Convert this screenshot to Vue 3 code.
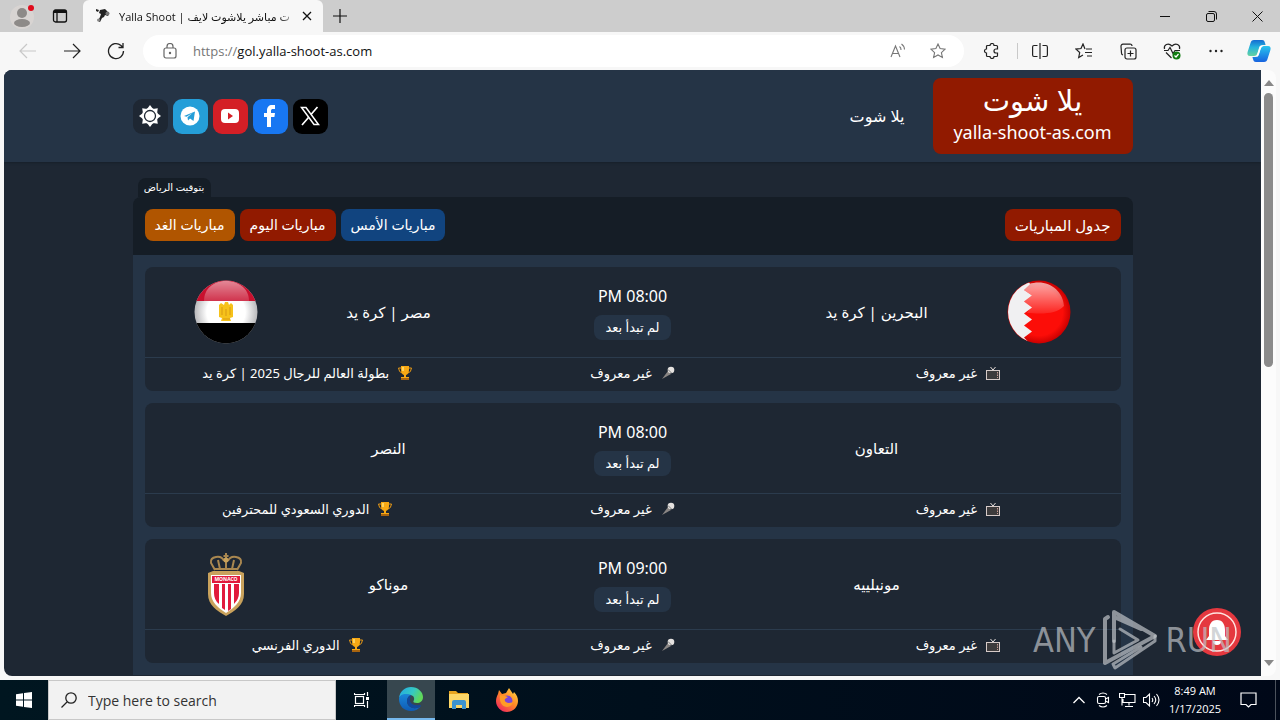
<template>
    <div class="desktop">
        <div class="browser">
            <div class="tab-bar">
                <div class="tab-tools">
                    <button class="plain profile" aria-label="Profile">
                        <svg width="26" height="26" viewBox="0 0 26 26">
                            <circle cx="13" cy="14" r="12" fill="#d8d4d2" />
                            <circle cx="13" cy="10" r="5" fill="#8d8a88" />
                            <ellipse cx="13" cy="20" rx="8" ry="4" fill="#8d8a88" />
                            <circle cx="22" cy="5" r="3" fill="#e00b1c" />
                        </svg>
                    </button>
                    <button class="plain" aria-label="Tab actions">
                        <svg width="16" height="16" viewBox="0 0 16 16" fill="none" stroke="#111" stroke-width="1.3">
                            <rect x="1.5" y="2" width="13" height="12" rx="2" />
                            <path d="M2 3.5h12" stroke-width="3" />
                            <path d="M5 4v10" />
                        </svg>
                    </button>
                </div>
                <div class="tab">
                    <svg class="favicon" width="16" height="16" viewBox="0 0 16 16" fill="#222">
                        <path d="M1 1l3 1-1 2-2-1zM5 2l5-1 2 2 2 3-1 2-3-1-1 2-2 1-2 4-2-1 2-4 1-3-2-1z" />
                        <circle cx="12.5" cy="5.5" r="2" fill="#777" />
                        <circle cx="3.500" cy="12" r="1.5" fill="#888" />
                    </svg>
                    <span class="tab-title">Yalla Shoot | ت مباشر يلاشوت لايف</span>
                    <button class="plain tab-close" aria-label="Close tab">
                        <svg width="10" height="10" viewBox="0 0 10 10" stroke="#111" stroke-width="1.3"><path d="M1 1l8 8M9 1l-8 8" /></svg>
                    </button>
                </div>
                <button class="plain new-tab" aria-label="New tab">
                    <svg width="14" height="14" viewBox="0 0 14 14" stroke="#111" stroke-width="1.2"><path d="M7 0v14M0 7h14" /></svg>
                </button>
                <div class="window-buttons">
                    <button class="plain" aria-label="Minimize">
                        <svg width="10" height="10" viewBox="0 0 10 10" stroke="#111"><path d="M0 5.5h10" /></svg>
                    </button>
                    <button class="plain" aria-label="Restore">
                        <svg width="11" height="11" viewBox="0 0 11 11" fill="none" stroke="#111">
                            <rect x=".5" y="2.5" width="8" height="8" rx="1.5" />
                            <path d="M2.5.5H8a2.5 2.5 0 0 1 2.500 2.500v5.500" />
                        </svg>
                    </button>
                    <button class="plain" aria-label="Close">
                        <svg width="11" height="11" viewBox="0 0 11 11" stroke="#111"><path d="M.5.5l10 10M10.500.5l-10 10" /></svg>
                    </button>
                </div>
            </div>

            <div class="toolbar">
                <button class="plain tool" aria-label="Back">
                    <svg width="18" height="16" viewBox="0 0 18 16" fill="none" stroke="#c8c8c8" stroke-width="1.2"><path d="M17 8H1M8 1L1 8l7 7" /></svg>
                </button>
                <button class="plain tool" aria-label="Forward">
                    <svg width="18" height="16" viewBox="0 0 18 16" fill="none" stroke="#222" stroke-width="1.2"><path d="M1 8h16M10 1l7 7-7 7" /></svg>
                </button>
                <button class="plain tool" aria-label="Refresh">
                    <svg width="18" height="18" viewBox="0 0 18 18" fill="none" stroke="#222" stroke-width="1.3"><path d="M16.500 9A7.500 7.500 0 1 1 14 3.500L16 5.500M16 1v4.500h-4.500" /></svg>
                </button>
                <label class="address">
                    <svg class="lock" width="14" height="16" viewBox="0 0 14 16" fill="none" stroke="#666" stroke-width="1.200">
                        <rect x="1" y="5" width="12" height="10" rx="2" />
                        <path d="M4 5V3.500a3 3 0 0 1 6 0V5" />
                        <circle cx="7" cy="10" r=".6" fill="#666" />
                    </svg>
                    <span class="scheme">https://</span>
                    <input v-model="address" class="address-input" type="text" aria-label="Address">
                    <svg class="address-icon" width="16" height="16" viewBox="0 0 16 16" fill="none" stroke="#777" stroke-width="1.100">
                        <path d="M1 14L5.500 3 10 14M2.500 10.500h6M9.500 3.500a4 4 0 0 1 1.500 3.500M11.500 1a7 7 0 0 1 3 5.500" />
                    </svg>
                    <svg class="address-icon" width="16" height="16" viewBox="0 0 16 16" fill="none" stroke="#777" stroke-width="1.100">
                        <path d="M8 1l2.100 4.600 5 .6-3.700 3.400 1 4.900L8 12l-4.400 2.500 1-4.900L.9 6.200l5-.6z" />
                    </svg>
                </label>
                <button class="plain tool" aria-label="Extensions">
                    <svg width="16" height="16" viewBox="0 0 16 16" fill="none" stroke="#222" stroke-width="1.200">
                        <path d="M4.500 2.500H7a2 2 0 0 1 4 0h2.500A1 1 0 0 1 14.500 3.500V6H13a2 2 0 0 0 0 4h1.500v2.500a1 1 0 0 1-1 1H11a2 2 0 0 1-4 0H4.500a1 1 0 0 1-1-1V10a2 2 0 0 1 0-4V3.500a1 1 0 0 1 1-1z" />
                    </svg>
                </button>
                <span class="divider"></span>
                <button class="plain tool" aria-label="Split screen">
                    <svg width="16" height="16" viewBox="0 0 16 16" fill="none" stroke="#222" stroke-width="1.200">
                        <path d="M5.500 2.500H2A1.500 1.500 0 0 0 .6 4v8A1.500 1.500 0 0 0 2 13.500h3.500M10.500 2.500H14A1.500 1.500 0 0 1 15.400 4v8a1.500 1.500 0 0 1-1.400 1.500h-3.500M8 0v16" />
                    </svg>
                </button>
                <button class="plain tool" aria-label="Favorites">
                    <svg width="18" height="16" viewBox="0 0 18 16" fill="none" stroke="#222" stroke-width="1.200">
                        <path d="M10 6L8 1 6 5.500l-5 .6 3.700 3.400-1 5L8 12M11 6h6M10 9.500h7M12 13h5" />
                    </svg>
                </button>
                <button class="plain tool" aria-label="Collections">
                    <svg width="17" height="17" viewBox="0 0 17 17" fill="none" stroke="#222" stroke-width="1.200">
                        <rect x="5" y="5" width="11" height="11" rx="2" />
                        <path d="M10.500 7.500v6M7.500 10.500h6M3 12A2 2 0 0 1 1.500 10L1 3.500A2 2 0 0 1 3 1.200L10 1a2 2 0 0 1 2 2" />
                    </svg>
                </button>
                <button class="plain tool" aria-label="Browser essentials">
                    <svg width="18" height="18" viewBox="0 0 18 18" fill="none" stroke="#222" stroke-width="1.200">
                        <path d="M1.500 7C.5 3 5 0 9 4c4-4 8.500-1 7.500 3M3 10.500L8.500 16M1 8.500h4L7 5.500l3 6 2-3h5" />
                        <circle cx="13.500" cy="13.500" r="4" fill="#107c10" stroke="none" />
                        <path d="M11.500 13.500l1.500 1.500 2.500-3" stroke="#fff" />
                    </svg>
                </button>
                <button class="plain tool" aria-label="More">
                    <svg width="14" height="4" viewBox="0 0 14 4" fill="#222"><circle cx="1.500" cy="2" r="1.200" /><circle cx="7" cy="2" r="1.200" /><circle cx="12.500" cy="2" r="1.200" /></svg>
                </button>
                <button class="plain copilot" aria-label="Copilot">
                    <svg width="24" height="24" viewBox="0 0 24 24">
                        <defs>
                            <linearGradient id="cpA" x1="0" y1="0" x2="0" y2="1"><stop offset="0" stop-color="#146bd1" /><stop offset=".45" stop-color="#25b2dd" /><stop offset="1" stop-color="#64d2a0" /></linearGradient>
                            <linearGradient id="cpB" x1="0" y1="0" x2="0" y2="1"><stop offset="0" stop-color="#29c5ee" /><stop offset="1" stop-color="#1763df" /></linearGradient>
                        </defs>
                        <path d="M7 1h8c2 0 2.500 1 3 3l.6 2h-3c-2 0-3 1-3.600 3l-1.500 5c-.6 2-1.500 3-3.500 3H3c-2.500 0-3-2-2.400-4L3.500 4C4 2 5 1 7 1z" fill="url(#cpA)" />
                        <path d="M17 23H9c-2 0-2.500-1-3-3l-.6-2h3c2 0 3-1 3.600-3l1.500-5c.6-2 1.500-3 3.500-3h4c2.500 0 3 2 2.400 4L20.500 20c-.5 2-1.500 3-3.500 3z" fill="url(#cpB)" />
                        <path d="M13 7h3c-1.500 1-2 2-2.500 3.500L12 15c-.5 1.500-1 2.500-2.500 3 .5-1 .5-2 1-3.500z" fill="#fff" />
                    </svg>
                </button>
            </div>

            <div class="viewport">
                <div class="site" dir="rtl" lang="ar">
                    <header class="site-header">
                        <div class="container header-row">
                            <a class="logo" href="#">
                                <span class="logo-name">يلا شوت</span>
                                <span class="logo-domain" dir="ltr">yalla-shoot-as.com</span>
                            </a>
                            <nav>
                                <a class="nav-link" href="#">يلا شوت</a>
                            </nav>
                            <div class="social">
                                <a class="social-link x" href="#" aria-label="X">
                                    <svg width="20" height="20" viewBox="0 0 20 20" fill="none" stroke="#fff">
                                        <path d="M1.500 1.500H6L18.500 18.500H14z" stroke-width="1.500" />
                                        <path d="M17.500 1L11 8.500M8.500 11.500L2 19" stroke-width="1.700" />
                                    </svg>
                                </a>
                                <a class="social-link facebook" href="#" aria-label="Facebook">
                                    <svg width="14" height="24" viewBox="0 0 14 24" fill="#fff"><path d="M4 23V13H1V9h3V6.500C4 3 6 1 9 1h3v4h-2c-1.300 0-2 .6-2 2v2h4l-.6 4H8v10z" /></svg>
                                </a>
                                <a class="social-link youtube" href="#" aria-label="YouTube">
                                    <svg width="20" height="16" viewBox="0 0 20 16"><rect x="1" y="1" width="18" height="14" rx="4" fill="#fff" /><path d="M8 4.500v7l5-3.500z" fill="#d41f26" /></svg>
                                </a>
                                <a class="social-link telegram" href="#" aria-label="Telegram">
                                    <svg width="20" height="20" viewBox="0 0 20 20"><circle cx="10" cy="10" r="9.500" fill="#fff" /><path d="M4 10l11-4.500-1.500 9.500-3.500-2.500-2 2-.5-3.300 5-4.200-6 3.700z" fill="#259ed8" /></svg>
                                </a>
                                <button class="plain social-link theme" aria-label="المظهر">
                                    <svg width="24" height="24" viewBox="0 0 24 24" fill="none" stroke="#fff">
                                        <circle cx="12" cy="12" r="8" fill="#fff" stroke="none" />
                                        <path v-for="angle in rays" :key="angle" d="M9 5L12 1l3 4z" fill="#fff" stroke="none" :transform="`rotate(${angle} 12 12)`" />
                                        <circle cx="12" cy="12" r="5.500" stroke="#1e2733" stroke-width="1.300" />
                                    </svg>
                                </button>
                            </div>
                        </div>
                    </header>

                    <main class="container">
                        <div class="timezone">بتوقيت الرياض</div>
                        <div class="schedule-head">
                            <h1 class="pill title">جدول المباريات</h1>
                            <a v-for="day in days" :key="day.id" class="pill" :class="day.id" href="#">{{ day.label }}</a>
                        </div>
                        <div class="schedule">
                            <article v-for="match in matches" :key="match.home" class="match">
                                <div class="match-main">
                                    <div class="crest">
                                        <svg v-if="match.homeLogo === 'bahrain'" width="64" height="64" viewBox="0 0 64 64">
                                            <defs>
                                                <radialGradient id="bhRed" cx=".5" cy=".5" r=".5"><stop offset=".75" stop-color="#fc0d08" /><stop offset="1" stop-color="#c90000" /></radialGradient>
                                                <linearGradient id="bhGloss" x1="0" y1="0" x2="0" y2="1"><stop offset="0" stop-color="#fff" stop-opacity=".65" /><stop offset="1" stop-color="#fff" stop-opacity=".1" /></linearGradient>
                                                <clipPath id="bhClip"><circle cx="32" cy="32" r="31" /></clipPath>
                                            </defs>
                                            <circle cx="32" cy="32" r="31.500" fill="url(#bhRed)" />
                                            <path d="M0 0h21L23 4l-6 6 8 5.500-8 6 8 6-8 6 8 6-8 6 8 6-8 6 6 6-2 6H0z" fill="#f0f0f2" clip-path="url(#bhClip)" />
                                            <path d="M22 4C40-2 56 10 57 26c-8 8-19 8-37 7l4-6-7-5.500 8-6-8-5.500z" fill="url(#bhGloss)" />
                                        </svg>
                                    </div>
                                    <div class="team">{{ match.home }}</div>
                                    <div class="status">
                                        <span class="kickoff">{{ match.time }}</span>
                                        <span class="state">لم تبدأ بعد</span>
                                    </div>
                                    <div class="team">{{ match.away }}</div>
                                    <div class="crest">
                                        <svg v-if="match.awayLogo === 'egypt'" width="64" height="64" viewBox="0 0 64 64">
                                            <defs>
                                                <linearGradient id="egGloss" x1="0" y1="0" x2="0" y2="1"><stop offset="0" stop-color="#fff" stop-opacity=".5" /><stop offset="1" stop-color="#fff" stop-opacity=".15" /></linearGradient>
                                                <radialGradient id="egWhite"><stop offset=".6" stop-color="#fff" /><stop offset="1" stop-color="#b5b5b8" /></radialGradient>
                                                <clipPath id="egClip"><circle cx="32" cy="32" r="31.500" /></clipPath>
                                            </defs>
                                            <g clip-path="url(#egClip)">
                                                <rect width="64" height="64" fill="url(#egWhite)" />
                                                <rect width="64" height="21" fill="#c8102e" />
                                                <rect y="43" width="64" height="21" fill="#000" />
                                                <path d="M10 21C10 8 20 1 32 1s23 7 23 20z" fill="url(#egGloss)" />
                                            </g>
                                            <path d="M31 22h3l1 3 2-2 2 2v12l-3 1 1 3H27l1-3-3-1V25l2-2 3 2z" fill="#f6c21a" />
                                            <path d="M28 27v8M36 27v8M32 29v7M29 39h7" stroke="#d99a12" fill="none" />
                                        </svg>
                                        <svg v-if="match.awayLogo === 'monaco'" width="38" height="64" viewBox="0 0 38 64">
                                            <path d="M1 21l5-2h26l5 2v21c0 11-9 17-18 22C10 59 1 53 1 42z" fill="#c9a25c" />
                                            <path d="M4 23h30v18c0 9-7 15-15 20C11 56 4 50 4 41z" fill="#fff" />
                                            <path d="M5 24h28v7H5zM7 32h5v20q-5-4-5-11zM15 32h3v26l-3-2zM21 32h3v25l-3 2zM27 32h5v9q0 6-5 11z" fill="#e11a3c" />
                                            <text x="19" y="29" font-size="5" font-weight="700" fill="#fff" text-anchor="middle" direction="ltr">MONACO</text>
                                            <path d="M8 18L4 11q-1-5 5-6 6-1 8 4M30 18l4-7q1-5-5-6-6-1-8 4M13 17l-2-9M25 17l2-9M19 17V1M16.500 4h5M8 17h22" fill="none" stroke="#a98750" stroke-width="2" />
                                            <circle cx="19" cy="8" r="2.500" fill="#c9a25c" />
                                        </svg>
                                    </div>
                                </div>
                                <div class="match-info">
                                    <div class="info">
                                        <svg width="14" height="14" viewBox="0 0 14 14" fill="none">
                                            <path d="M4.500 1L7 4l2.500-3" stroke="#e8e0dc" />
                                            <rect x=".5" y="4.500" width="13" height="9" fill="#3d3b3c" stroke="#d6cac8" />
                                            <path d="M11.500 6v6" stroke="#c99a91" stroke-dasharray="1.500 1" />
                                        </svg>
                                        <span>غير معروف</span>
                                    </div>
                                    <div class="info">
                                        <svg width="14" height="14" viewBox="0 0 14 14">
                                            <path d="M1 13L7 5l3 3z" fill="#8a8684" />
                                            <circle cx="10" cy="4" r="3.300" fill="#e5e2e0" />
                                            <path d="M7 3.500L10.500 7" stroke="#777" />
                                        </svg>
                                        <span>غير معروف</span>
                                    </div>
                                    <div class="info">
                                        <svg width="14" height="14" viewBox="0 0 14 14">
                                            <path d="M3 2H.5Q1 6.500 4 7M11 2h2.500Q13 6.500 10 7" fill="none" stroke="#e99a16" />
                                            <path d="M3 0h8v4c0 3-1.500 4.500-3 5v2h3v3H3v-3h3V9C4.500 8.500 3 7 3 4z" fill="#f8a914" />
                                            <path d="M5 1v4" stroke="#ffe27a" stroke-width="1.500" />
                                            <path d="M3 12h8v2H3z" fill="#a8640f" />
                                        </svg>
                                        <span>{{ match.league }}</span>
                                    </div>
                                </div>
                            </article>
                        </div>
                    </main>
                </div>
                <div class="scrollbar">
                    <svg width="10" height="6" viewBox="0 0 10 6" fill="#888"><path d="M0 6l5-6 5 6z" /></svg>
                    <div class="track"><div class="thumb"></div></div>
                    <svg width="10" height="6" viewBox="0 0 10 6" fill="#888"><path d="M0 0l5 6 5-6z" /></svg>
                </div>

                <button class="plain bell" aria-label="الإشعارات">
                    <svg width="48" height="48" viewBox="0 0 48 48">
                        <circle cx="24" cy="24" r="24" fill="#e5383f" />
                        <circle cx="24" cy="24" r="19" fill="none" stroke="#ffe4e0" stroke-width="1.500" />
                        <path d="M24 12c-6 0-8 5-8 10v6l-3 4h22l-3-4v-6c0-5-2-10-8-10zM20 33a4 4 0 0 0 8 0z" fill="#fff" />
                    </svg>
                </button>
                <div class="watermark">
                    <span>ANY</span>
                    <svg width="56" height="62" viewBox="0 0 56 62" fill="none" stroke="currentColor" stroke-width="4" stroke-linejoin="round" stroke-linecap="round">
                        <path d="M12 32V3l41 24M53 27L3 54V10l3-2M39 20L12 8" />
                        <path d="M53 27v5L13 59l-2-4 28-17M12 32v12l24-13L18 20" stroke-width="3" />
                    </svg>
                    <span>RUN</span>
                </div>
            </div>
        </div>

        <div class="taskbar">
            <button class="plain start" aria-label="Start">
                <svg width="16" height="16" viewBox="0 0 16 16" fill="#fff"><path d="M0 2.200L7 1.200V7.500H0zM8 1l8-1v7.500H8zM0 8.500h7v6.300l-7-1zM8 8.500h8V16l-8-1.100z" /></svg>
            </button>
            <label class="search">
                <svg width="16" height="16" viewBox="0 0 16 16" fill="none" stroke="#222" stroke-width="1.300"><circle cx="10" cy="6" r="5.200" /><path d="M6 10l-5.500 5.500" /></svg>
                <input v-model="query" class="search-input" type="text" placeholder="Type here to search" aria-label="Search">
            </label>
            <button class="plain task-view" aria-label="Task view">
                <svg width="16" height="16" viewBox="0 0 16 16" fill="none" stroke="#fff" stroke-width="1.200"><rect x="1.500" y="4.500" width="8" height="7" /><path d="M.5 1v1.500h10V1M.5 15v-1.500h10V15M13.500 0v4M13.500 9v7" /><path d="M13.500 5v3" stroke-width="3" /></svg>
            </button>
            <button class="plain app active" aria-label="Edge">
                <svg width="24" height="24" viewBox="0 0 24 24">
                    <defs>
                        <linearGradient id="edTop" x1="0" y1="0" x2="1" y2=".4"><stop offset="0" stop-color="#22a7e6" /><stop offset=".6" stop-color="#35c9c3" /><stop offset="1" stop-color="#60d85a" /></linearGradient>
                        <linearGradient id="edLow" x1="0" y1="0" x2="0" y2="1"><stop offset="0" stop-color="#1a86d8" /><stop offset="1" stop-color="#0f5bb5" /></linearGradient>
                    </defs>
                    <path d="M0 11C1 4 6 0 12 0c7 0 12 5 12 10 0 4-3 6-6 6s-4-1-3.500-2C16 12 15 8 11 8 6 7 1 8 0 11z" fill="url(#edTop)" />
                    <path d="M0 12c0-3 3-5 7-5 3 0 5 1 5 1-3 1-4 4-4 6 0 5 5 8 9 7 2 0 4-1 5-2-2 3-6 5-10 5C5 24 0 19 0 12z" fill="url(#edLow)" />
                    <path d="M12 8c-3 1-4 4-4 6 0 5 5 8 9 7 2 0 4-1 5-2 0-1-1-1-2-1-5 1-10-2-9-6 0-2 1-3 1-4z" fill="#12489c" />
                </svg>
            </button>
            <button class="plain app" aria-label="File Explorer">
                <svg width="22" height="20" viewBox="0 0 22 20"><path d="M1 1h7l2 2h10v3H1z" fill="#e8a520" /><rect x="1" y="4" width="20" height="14" fill="#fdd767" /><path d="M4 19v-7q0-2 2-2h10q2 0 2 2v7h-4v-4H8v4z" fill="#3d94cf" /></svg>
            </button>
            <button class="plain app" aria-label="Firefox">
                <svg width="24" height="24" viewBox="0 0 24 24">
                    <defs><linearGradient id="ffBody" x1="1" y1="0" x2=".2" y2="1"><stop offset="0" stop-color="#ffe14a" /><stop offset=".5" stop-color="#ff8b25" /><stop offset="1" stop-color="#f0245e" /></linearGradient></defs>
                    <path d="M3 6l1-4 3 4 4-1 3-5c2 3 3 4 4 6l1-2c3 3 4 6 4 9 0 6-5 11-11 11S1 19 1 13c0-3 1-5 2-7z" fill="url(#ffBody)" />
                    <circle cx="12" cy="13" r="5.500" fill="#7a45d8" />
                    <path d="M5 7l5 1 3 1-3 2c-1 2 1 4 4 4 2 0 4-1 4-2 0 4-3 6-6 6-5 0-8-5-7-12z" fill="#ff9b26" />
                </svg>
            </button>
            <div class="tray">
                <button class="plain tray-button" aria-label="Show hidden icons">
                    <svg width="12" height="8" viewBox="0 0 12 8" fill="none" stroke="#fff" stroke-width="1.300"><path d="M.5 7L6 1.500 11.500 7" /></svg>
                </button>
                <button class="plain tray-button" aria-label="Meet now">
                    <svg width="14" height="18" viewBox="0 0 14 18" fill="none" stroke="#fff" stroke-width="1.100"><rect x="1.500" y="5.500" width="8" height="7" rx="1.500" /><path d="M9.500 8l3-1.500v5l-3-1.500M3 3.500q4-3 8 0M3 14.500q4 3 8 0" /></svg>
                </button>
                <button class="plain tray-button" aria-label="Network">
                    <svg width="17" height="16" viewBox="0 0 17 16" fill="none" stroke="#fff" stroke-width="1.100"><path d="M6 2.500h10v8H4V7M10 10.500v3M6 14.500h8M.5 1.500h5v4h-5zM3 5.500v8" /></svg>
                </button>
                <button class="plain tray-button" aria-label="Volume">
                    <svg width="17" height="16" viewBox="0 0 17 16" fill="none" stroke="#fff" stroke-width="1.100"><path d="M.5 5.500H3L6.500 2v12L3 10.500H.5zM9 6q1.500 2 0 4M11 4q3.500 4 0 8M13.500 2q5 6 0 12" /></svg>
                </button>
                <div class="clock">
                    <span>8:49 AM</span>
                    <span>1/17/2025</span>
                </div>
                <button class="plain notifications" aria-label="Notifications">
                    <svg width="17" height="17" viewBox="0 0 17 17" fill="none" stroke="#fff" stroke-width="1.200"><path d="M1 1h15v11.500h-5L8.500 15 6 12.500H1z" /></svg>
                </button>
            </div>
        </div>
    </div>
</template>

<script setup>
import { ref } from 'vue';

const address = ref('gol.yalla-shoot-as.com');
const query = ref('');

const rays = [0, 45, 90, 135, 180, 225, 270, 315];

const days = [
    { id: 'yesterday', label: 'مباريات الأمس' },
    { id: 'today', label: 'مباريات اليوم' },
    { id: 'tomorrow', label: 'مباريات الغد' }
];

const matches = [
    {
        home: 'البحرين | كرة يد',
        homeLogo: 'bahrain',
        away: 'مصر | كرة يد',
        awayLogo: 'egypt',
        time: '08:00 PM',
        league: 'بطولة العالم للرجال 2025 | كرة يد'
    },
    {
        home: 'التعاون',
        away: 'النصر',
        time: '08:00 PM',
        league: 'الدوري السعودي للمحترفين'
    },
    {
        home: 'مونبلييه',
        away: 'موناكو',
        awayLogo: 'monaco',
        time: '09:00 PM',
        league: 'الدوري الفرنسي'
    }
];
</script>

<style>
body {
    margin: 0;
}
</style>

<style scoped>
* {
    box-sizing: border-box;
}

.desktop {
    height: 100vh;
    display: flex;
    flex-direction: column;
    overflow: hidden;
    font-family: "Open Sans", "DejaVu Sans", sans-serif;
    font-size: 12px;
    color: #111;
}

.plain {
    display: flex;
    align-items: center;
    justify-content: center;
    padding: 0;
    border: 0;
    background: none;
}

svg {
    flex: none;
}

/* browser window */
.browser {
    flex: 1;
    min-height: 0;
    display: flex;
    flex-direction: column;
    background: #f7f7f7;
}

.tab-bar {
    height: 32px;
    display: flex;
    align-items: center;
    background: #cdcdcd;
}

.tab-tools {
    display: flex;
    align-items: center;
    gap: 17px;
    width: 83px;
    padding-left: 9px;
}

.tab {
    display: flex;
    align-items: center;
    width: 240px;
    height: 32px;
    padding: 0 6px 0 12px;
    background: #f7f7f7;
    border-radius: 6px 6px 0 0;
}

.favicon {
    margin-right: 8px;
}

.tab-title {
    flex: 1;
    font-size: 11px;
    white-space: nowrap;
    mask-image: linear-gradient(to right, #000 90%, transparent);
}

.tab-close {
    width: 20px;
    height: 20px;
}

.new-tab {
    width: 34px;
    height: 32px;
}

.window-buttons {
    display: flex;
    margin-left: auto;
}

.window-buttons button {
    width: 46px;
    height: 32px;
}

.toolbar {
    height: 38px;
    display: flex;
    align-items: center;
    padding-left: 6px;
}

.tool {
    width: 44px;
    height: 32px;
}

.address {
    flex: 1;
    display: flex;
    align-items: center;
    height: 32px;
    margin: 0 5px;
    padding: 0 18px 0 20px;
    background: #fff;
    border-radius: 16px;
    font-size: 13px;
}

.lock {
    margin-right: 16px;
}

.scheme {
    color: #767676;
}

.address-input {
    flex: 1;
    min-width: 0;
    padding: 0;
    border: 0;
    outline: 0;
    background: none;
    font: inherit;
    color: #111;
}

.address-icon {
    margin-left: 24px;
}

.divider {
    width: 1px;
    height: 16px;
    margin-left: 4px;
    background: #c9c9c9;
}

.copilot {
    width: 42px;
    height: 32px;
}

.viewport {
    flex: 1;
    min-height: 0;
    display: flex;
    position: relative;
    margin: 0 4px 4px;
    overflow: hidden;
    border-radius: 8px;
}

.scrollbar {
    width: 15px;
    display: flex;
    flex-direction: column;
    align-items: center;
    padding: 10px 0;
    background: #fcfcfc;
}

.track {
    flex: 1;
    width: 9px;
    padding: 7px 0;
}

.thumb {
    height: 49%;
    background: #8b8b8b;
    border-radius: 5px;
}

/* football site */
.site {
    flex: 1;
    min-width: 0;
    overflow: hidden;
    background: #1e2733;
    color: #fff;
    font-family: "Noto Sans", "DejaVu Sans", sans-serif;
}

.site a {
    color: #fff;
    text-decoration: none;
}

.container {
    width: 100%;
    max-width: 1000px;
    margin: 0 auto;
}

.site-header {
    padding: 8px 0;
    background: #253446;
    box-shadow: 0 1px 2px #16202a;
}

.header-row {
    display: flex;
    align-items: center;
}

.logo {
    display: flex;
    flex-direction: column;
    align-items: center;
    justify-content: center;
    width: 200px;
    height: 76px;
    padding-bottom: 8px;
    background: #911a00;
    border-radius: 8px;
}

.logo-name {
    font-size: 29px;
    line-height: 40px;
}

.logo-domain {
    font-size: 18px;
    line-height: 24px;
}

.nav-link {
    margin-right: 28px;
    font-size: 16px;
}

.social {
    display: flex;
    gap: 5px;
    margin-right: auto;
}

.social-link {
    display: flex;
    align-items: center;
    justify-content: center;
    width: 35px;
    height: 35px;
    border-radius: 9px;
}

.x {
    background: #000;
}

.facebook {
    background: #1877f2;
}

.youtube {
    background: #d41f26;
}

.telegram {
    background: #259ed8;
}

.theme {
    background: #1e2733;
}

.timezone {
    width: 73px;
    margin: 16px auto 0 5px;
    background: #151d26;
    border-radius: 8px 8px 0 0;
    font-size: 10px;
    line-height: 19px;
    text-align: center;
    white-space: nowrap;
}

.schedule-head {
    display: flex;
    gap: 5px;
    padding: 12px 12px 14px;
    background: #151d26;
    border-radius: 8px 8px 0 0;
}

.pill {
    margin: 0;
    padding: 0 10px;
    border-radius: 8px;
    font-size: 14px;
    font-weight: 400;
    line-height: 32px;
    white-space: nowrap;
}

.title {
    margin-left: auto;
    background: #911a00;
    font-size: 15px;
}

.yesterday {
    background: #11447f;
}

.today {
    background: #911a00;
}

.tomorrow {
    background: #b05500;
}

.schedule {
    display: flex;
    flex-direction: column;
    gap: 12px;
    padding: 12px;
    background: #253446;
}

.match {
    background: #1e2733;
    border-radius: 8px;
}

.match-main {
    display: grid;
    grid-template-columns: 1fr 1fr 2fr 1fr 1fr;
    align-items: center;
    justify-items: center;
    height: 90px;
}

.crest {
    display: flex;
}

.team {
    font-size: 15px;
    white-space: nowrap;
}

.status {
    display: flex;
    flex-direction: column;
    align-items: center;
    gap: 7px;
}

.kickoff {
    font-size: 16px;
    line-height: 24px;
}

.state {
    padding: 0 11px;
    background: #253446;
    border-radius: 8px;
    font-size: 13px;
    line-height: 25px;
}

.match-info {
    display: grid;
    grid-template-columns: repeat(3, 1fr);
    border-top: 1px solid #2b3b4d;
}

.info {
    display: flex;
    align-items: center;
    justify-content: center;
    gap: 9px;
    height: 33px;
    padding-bottom: 3px;
    font-size: 13px;
    white-space: nowrap;
}

.bell {
    position: absolute;
    right: 35px;
    bottom: 20px;
}

.watermark {
    position: absolute;
    right: 44px;
    bottom: 5px;
    display: flex;
    align-items: center;
    gap: 7px;
    color: rgba(190, 194, 198, 0.7);
    font-family: "DejaVu Sans Condensed", "DejaVu Sans", sans-serif;
    font-size: 34px;
    line-height: 62px;
    pointer-events: none;
}

/* windows taskbar */
.taskbar {
    height: 40px;
    display: flex;
    background: linear-gradient(to right, #001620, #000818);
}

.start {
    width: 48px;
}

.search {
    display: flex;
    align-items: center;
    gap: 11px;
    width: 288px;
    padding: 0 12px;
    background: #f2f2f2;
    border: 1px solid #c8c8c8;
}

.search-input {
    flex: 1;
    min-width: 0;
    padding: 0;
    border: 0;
    outline: 0;
    background: none;
    font: inherit;
    font-size: 14px;
}

.search-input::placeholder {
    color: #333;
    opacity: 1;
}

.task-view {
    width: 51px;
}

.app {
    width: 48px;
}

.active {
    background: #37474f;
    border-bottom: 2px solid #76b9ed;
}

.tray {
    display: flex;
    margin-left: auto;
    padding-right: 4px;
    color: #fff;
}

.tray-button {
    width: 24px;
}

.clock {
    display: flex;
    flex-direction: column;
    align-items: center;
    justify-content: center;
    width: 52px;
    margin-left: 6px;
    font-size: 11px;
    line-height: 18px;
}

.notifications {
    width: 55px;
    border-right: 1px solid #4b525c;
}
</style>
